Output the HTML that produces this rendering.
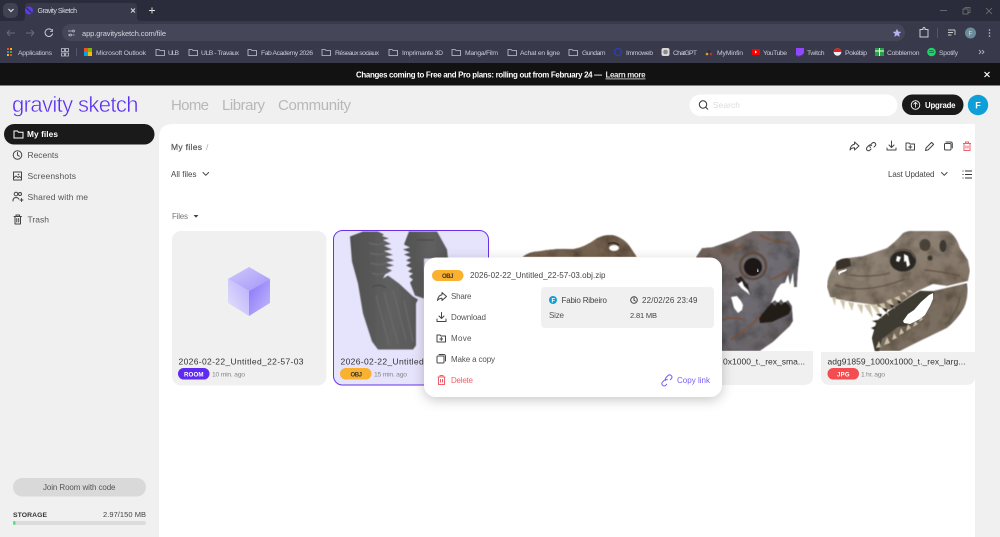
<!DOCTYPE html>
<html><head><meta charset="utf-8"><title>Gravity Sketch</title>
<style>
html,body{margin:0;padding:0;background:#f0f0f0;overflow:hidden}
svg{display:block;font-family:"Liberation Sans",sans-serif}
.ic{fill:none;stroke:#444;stroke-width:1;stroke-linecap:round;stroke-linejoin:round}
.bm{font-size:6.8px;fill:#c9cad4}
.fo{fill:none;stroke:#c5c6d0;stroke-width:.8}
.sd{font-size:8.5px;fill:#555}
.pm{font-size:8px;fill:#555}
</style></head><body>
<svg xmlns="http://www.w3.org/2000/svg" width="1000" height="537" viewBox="0 0 1000 537">
<defs>
<linearGradient id="cL" x1="1" y1="0" x2="0" y2="1"><stop offset="0" stop-color="#b9aefb"/><stop offset="1" stop-color="#e6e3fb"/></linearGradient>
<linearGradient id="cR" x1="0" y1="0" x2="1" y2="1"><stop offset="0" stop-color="#8672f9"/><stop offset="1" stop-color="#c5bcfb"/></linearGradient>
<linearGradient id="cT" x1="0" y1="0" x2="1" y2="1"><stop offset="0" stop-color="#cfc9fb"/><stop offset="1" stop-color="#a496fa"/></linearGradient>
<filter id="tex" x="0" y="0" width="100%" height="100%">
<feTurbulence type="fractalNoise" baseFrequency=".07" numOctaves="3" seed="4" result="n"/>
<feColorMatrix in="n" type="matrix" values="1.100 0 0 0 .34 1.100 0 0 0 .33 1.100 0 0 0 .32 0 0 0 0 1" result="m"/>
<feBlend in="SourceGraphic" in2="m" mode="multiply" result="b"/>
<feComposite in="b" in2="SourceGraphic" operator="in"/>
<feGaussianBlur stdDeviation=".5"/>
</filter>
<linearGradient id="sk5" x1="0" y1="0" x2="1" y2="1"><stop offset="0" stop-color="#94897b"/><stop offset=".5" stop-color="#8a7e70"/><stop offset="1" stop-color="#7d6e5f"/></linearGradient>
<linearGradient id="sk4" x1="0" y1="0" x2="1" y2="1"><stop offset="0" stop-color="#7a675a"/><stop offset=".5" stop-color="#6f6d74"/><stop offset="1" stop-color="#625d60"/></linearGradient>
<linearGradient id="me" x1="0" y1="0" x2="1" y2="0"><stop offset="0" stop-color="#505050"/><stop offset=".6" stop-color="#606060"/><stop offset="1" stop-color="#585858"/></linearGradient>
<filter id="sh" x="-20%" y="-20%" width="140%" height="150%"><feDropShadow dx="0" dy="3" stdDeviation="6" flood-color="#000" flood-opacity=".22"/></filter>
<filter id="sf"><feGaussianBlur stdDeviation=".5"/></filter>
<g id="folder"><path class="fo" d="M0 1.500h3l1 1h4.500v5h-8.500z"/></g>
</defs>

<!-- browser chrome -->
<rect width="1000" height="63" fill="#2b2c3b"/>
<rect y="21" width="1000" height="42" fill="#383a4c"/>
<rect x="3" y="3" width="15" height="15" rx="5" fill="#404152"/>
<path d="M8.500 9l2.500 2.500 2.500-2.500" fill="none" stroke="#ddd" stroke-width="1.200"/>
<path d="M21 21q4 0 4-4V7q0-4 4-4h104q4 0 4 4v10q0 4 4 4z" fill="#383a4c"/>
<circle cx="29" cy="10.500" r="4" fill="#5b3bea"/><path d="M26.500 8l5 5" stroke="#2b2c3b" stroke-width="1"/>
<text x="37.500" y="13" font-size="7" fill="#d8d8e0" textLength="39.500">Gravity Sketch</text>
<path d="M131 8.500l4 4M135 8.500l-4 4" stroke="#ddd" stroke-width=".9"/>
<path d="M149 10.500h6M152 7.500v6" stroke="#ddd" stroke-width="1"/>
<path d="M940 10.500h7" stroke="#777" stroke-width=".8"/>
<rect x="963" y="9" width="5" height="5" fill="none" stroke="#777" stroke-width=".8"/><path d="M965 9V7.500h5v5h-2" fill="none" stroke="#777" stroke-width=".7"/>
<path d="M986 8l6 6M992 8l-6 6" stroke="#777" stroke-width=".8"/>

<rect x="62" y="24" width="843" height="17" rx="8.500" fill="#454658"/>
<path d="M7 33h8M7 33l3-3M7 33l3 3" fill="none" stroke="#6b6c7a" stroke-width="1"/>
<path d="M34 33h-8M34 33l-3-3M34 33l-3 3" fill="none" stroke="#6b6c7a" stroke-width="1"/>
<path d="M52 30.500a3.800 3.800 0 1 0 .6 3" fill="none" stroke="#c9cad4" stroke-width="1"/><path d="M52.500 29v2.500H50" fill="none" stroke="#c9cad4" stroke-width=".8"/>
<path d="M68 31h4M68 35h1.500M72.500 35h2" stroke="#c9cad4" stroke-width=".8"/><circle cx="73.500" cy="31" r="1" fill="none" stroke="#c9cad4" stroke-width=".7"/><circle cx="70.500" cy="35" r="1" fill="none" stroke="#c9cad4" stroke-width=".7"/>
<text x="82" y="36" font-size="7.500" fill="#d5d6de" textLength="84">app.gravitysketch.com/file</text>
<path d="M897 28.800l1.300 2.800 3 .3-2.300 2 .7 3-2.700-1.600-2.700 1.600.7-3-2.300-2 3-.3z" fill="#b7b3f2"/>
<path d="M920 29.500h3v-1a1 1 0 0 1 2 0v1h3v7.500h-8z" fill="none" stroke="#ccc" stroke-width="1"/>
<path d="M937.500 28v10" stroke="#555668"/>
<path d="M948 30h7M948 32.500h5M948 35h3.500M955 30v5" stroke="#ccc" stroke-width=".9" fill="none"/>
<circle cx="970.500" cy="33" r="5.500" fill="#6c8c9a"/><text x="968.500" y="35.500" font-size="6" fill="#ddd">F</text>
<circle cx="989.500" cy="30" r=".8" fill="#ccc"/><circle cx="989.500" cy="33" r=".8" fill="#ccc"/><circle cx="989.500" cy="36" r=".8" fill="#ccc"/>

<!-- bookmarks -->
<g>
<rect x="7" y="48" width="2" height="2" fill="#e84a3c"/><rect x="10" y="48" width="2" height="2" fill="#f4b400"/><rect x="7" y="51" width="2" height="2" fill="#3b7ded"/><rect x="10" y="51" width="2" height="2" fill="#32a852"/><rect x="7" y="54" width="2" height="2" fill="#f4b400"/><rect x="10" y="54" width="2" height="2" fill="#e84a3c"/>
<text class="bm" x="18" y="55" textLength="34">Applications</text>
<path d="M61.500 48.500h3v3h-3zM65.500 48.500h3v3h-3zM61.500 53h3v3h-3zM65.500 53h3v3h-3z" fill="none" stroke="#c5c6d0" stroke-width=".8"/>
<path d="M76.500 48v8" stroke="#555668"/>
<rect x="84" y="48" width="4" height="4" fill="#f25022"/><rect x="88" y="48" width="4" height="4" fill="#7fba00"/><rect x="84" y="52" width="4" height="4" fill="#00a4ef"/><rect x="88" y="52" width="4" height="4" fill="#ffb900"/>
<text class="bm" x="96" y="55" textLength="50">Microsoft Outlook</text>
<use href="#folder" x="156" y="48"/><text class="bm" x="168" y="55" textLength="11">ULB</text>
<use href="#folder" x="189" y="48"/><text class="bm" x="201" y="55" textLength="38">ULB - Travaux</text>
<use href="#folder" x="248" y="48"/><text class="bm" x="261" y="55" textLength="52">Fab Academy 2026</text>
<use href="#folder" x="322" y="48"/><text class="bm" x="335" y="55" textLength="44">Réseaux sociaux</text>
<use href="#folder" x="389" y="48"/><text class="bm" x="402" y="55" textLength="41">Imprimante 3D</text>
<use href="#folder" x="452" y="48"/><text class="bm" x="465" y="55" textLength="33">Manga/Film</text>
<use href="#folder" x="508" y="48"/><text class="bm" x="520" y="55" textLength="40">Achat en ligne</text>
<use href="#folder" x="569" y="48"/><text class="bm" x="582" y="55" textLength="23.500">Gundam</text>
<circle cx="618" cy="52" r="3.500" fill="none" stroke="#2d3fc4" stroke-width="1.100"/><text class="bm" x="626" y="55" textLength="27">Immoweb</text>
<rect x="661.500" y="48" width="8" height="8" rx="2" fill="#d8d8d8"/><circle cx="665.500" cy="52" r="2.300" fill="#888"/><text class="bm" x="673" y="55" textLength="24">ChatGPT</text>
<circle cx="707" cy="54" r="1.300" fill="#d8a020"/><circle cx="711" cy="54" r="1.300" fill="#c03030"/><circle cx="709" cy="51.500" r="1" fill="#222"/><text class="bm" x="717" y="55" textLength="26">MyMinfin</text>
<rect x="752" y="49" width="8" height="6" rx="1" fill="#f00"/><path d="M755 50.500l2.200 1.500-2.200 1.500z" fill="#fff"/><text class="bm" x="763" y="55" textLength="24">YouTube</text>
<path d="M796 48h8v5l-2.500 2.500h-2L798 57v-1.500h-2z" fill="#9146ff"/><text class="bm" x="807" y="55" textLength="17.500">Twitch</text>
<circle cx="837.500" cy="52" r="3.800" fill="#eee"/><path d="M833.700 52a3.800 3.800 0 0 1 7.600 0z" fill="#d22"/><text class="bm" x="845" y="55" textLength="22">Pokébip</text>
<rect x="875" y="48" width="9" height="8" fill="#25a244"/><path d="M879.500 48v8M875 51h9" stroke="#fff" stroke-width="1"/><text class="bm" x="887" y="55" textLength="32.500">Cobblemon</text>
<circle cx="931.500" cy="52" r="4.300" fill="#1ed760"/><path d="M929 50.800q2.500-.6 5 .5M929.300 52.400q2.200-.5 4.300.4" stroke="#145" stroke-width=".6" fill="none"/><text class="bm" x="939" y="55" textLength="19">Spotify</text>
<path d="M979 50l2 2-2 2M982 50l2 2-2 2" fill="none" stroke="#c5c6d0" stroke-width=".8"/>
</g>

<!-- banner -->
<rect y="63" width="1000" height="22.500" fill="#121212"/>
<text x="356" y="77.500" font-size="7.900" font-weight="bold" fill="#fff" textLength="246">Changes coming to Free and Pro plans: rolling out from February 24 —</text>
<text x="605.500" y="77.500" font-size="7.900" font-weight="bold" fill="#e8e8e8" textLength="40" text-decoration="underline">Learn more</text>
<path d="M984.500 72l5 5M989.500 72l-5 5" stroke="#fff" stroke-width="1.200"/>

<!-- header -->
<rect y="85.500" width="1000" height="452" fill="#f0f0f0"/>
<text x="12" y="112" font-size="22" fill="#5a2ff0" stroke="#f0f0f0" stroke-width=".45" textLength="126.500">gravity sketch</text>
<text x="171" y="110" font-size="15" fill="#b8b8b8" textLength="38">Home</text>
<text x="222" y="110" font-size="15" fill="#b8b8b8" textLength="43">Library</text>
<text x="278" y="110" font-size="15" fill="#b8b8b8" textLength="73">Community</text>
<rect x="689.500" y="94.500" width="208" height="21.500" rx="10.700" fill="#fff"/>
<circle cx="703" cy="104.500" r="3.700" fill="none" stroke="#333" stroke-width="1"/><path d="M705.700 107.200l2.300 2.300" stroke="#333" stroke-width="1"/>
<text x="713" y="108" font-size="8.500" fill="#dcdcdc" textLength="27">Search</text>
<rect x="902" y="94.500" width="61.500" height="20.500" rx="10.200" fill="#1a1a1a"/>
<circle cx="915.500" cy="105" r="4.300" fill="none" stroke="#fff" stroke-width=".9"/><path d="M915.500 107.500v-5M913.500 104.300l2-2 2 2" fill="none" stroke="#fff" stroke-width=".8"/>
<text x="925" y="108" font-size="7.800" font-weight="bold" fill="#fff" textLength="30.500">Upgrade</text>
<circle cx="978" cy="105" r="10.200" fill="#0e9fd8"/><text x="975.200" y="108.500" font-size="9" font-weight="bold" fill="#fff">F</text>

<!-- sidebar -->
<rect x="4" y="124" width="150.500" height="20.500" rx="10.200" fill="#1a1a1a"/>
<path d="M14 131h3.500l1 1.300h4.500v5.700h-9z" fill="none" stroke="#fff" stroke-width="1"/>
<text x="27" y="137" font-size="8.300" font-weight="bold" fill="#fff" textLength="31">My files</text>
<circle cx="17.500" cy="155" r="4.300" class="ic"/><path class="ic" d="M17.500 152.500v2.700l1.800 1"/>
<text class="sd" x="27.500" y="158" textLength="31">Recents</text>
<rect x="13.500" y="172" width="8" height="8" class="ic"/><path class="ic" d="M13.500 178l2.500-2 2 1.500 1.500-1 2 1.500"/><circle cx="18.500" cy="174.500" r=".8" fill="#444"/>
<text class="sd" x="27.500" y="179" textLength="48.500">Screenshots</text>
<circle cx="16" cy="194" r="1.800" class="ic"/><circle cx="20" cy="194" r="1.500" class="ic"/><path class="ic" d="M13 201q0-3.500 3-3.500 2 0 2.800 1.500M20 200h3M21.500 198.500v3"/>
<text class="sd" x="27.500" y="200" textLength="60.500">Shared with me</text>
<path class="ic" d="M14 216.500h7.500M15 216.500v7.500h5.500v-7.500M16 216.500v-1.500h3.500v1.500M16.800 218.500v3.500M18.700 218.500v3.500"/>
<text class="sd" x="27.500" y="222.500" textLength="21.500">Trash</text>
<rect x="13" y="478" width="133" height="18.500" rx="9.200" fill="#d9d9d9"/>
<text x="43" y="490" font-size="8" fill="#555" textLength="72.500">Join Room with code</text>
<text x="13" y="517" font-size="6.800" fill="#333" textLength="34" font-weight="bold">STORAGE</text>
<text x="103" y="517" font-size="7.500" fill="#444" textLength="43">2.97/150 MB</text>
<rect x="13" y="521" width="133" height="4" rx="2" fill="#dcdcdc"/><rect x="13" y="521" width="2.500" height="4" rx="1.200" fill="#5fdc7c"/>

<!-- main panel -->
<path d="M975 124v413H159V138q0-14 14-14z" fill="#fff"/>
<text x="171" y="150" font-size="8.500" fill="#555" stroke="#555" stroke-width=".2" textLength="31">My files</text>
<text x="206" y="150" font-size="8.500" fill="#aaa">/</text>
<text x="171" y="177" font-size="8" fill="#444" textLength="25.500">All files</text>
<path class="ic" d="M203 172.500l2.800 2.800 2.800-2.800"/>
<text x="172" y="219" font-size="8" fill="#777" textLength="16">Files</text>
<path d="M193.500 215h5l-2.500 2.800z" fill="#444"/>

<!-- action icons -->
<path class="ic" d="M854.500 142l4.500 4-4.500 4v-2.300q-3 0-4.500 2.300.5-5 4.500-5.700z"/>
<path class="ic" transform="translate(0 1.500)" d="M871 147.500l-1.300 1.300a2 2 0 0 1-2.800-2.800l2-2a2 2 0 0 1 2.800 0M874 145.500l1.300-1.300a2 2 0 0 0-2.800-2.800l-2 2a2 2 0 0 0 0 2.800"/>
<path class="ic" d="M891.500 141v6M889 145l2.500 2.500 2.500-2.500M887 148v2h9v-2"/>
<path class="ic" d="M906 143h3l1 1h4.500v6H906zM910.300 145.500v3M908.800 147h3"/>
<path class="ic" d="M925.500 150.500l.6-2.600 5.500-5.500 2 2-5.500 5.500z"/>
<rect x="944.500" y="143.500" width="6.500" height="6.500" rx="1" class="ic"/><path class="ic" d="M946 142h4.500q1.800 0 1.800 1.800V148"/>
<path d="M963 143.500h8M964 143.500v7h6v-7M965.500 143.500V142h3v1.500M966 145.500v3M968 145.500v3" fill="none" stroke="#f0606a" stroke-width="1"/>
<text x="888" y="177" font-size="8" fill="#444" textLength="46.500">Last Updated</text>
<path class="ic" d="M941.500 172.500l2.800 2.800 2.800-2.800"/>
<path d="M965 171h7M965 174.500h7M965 178h7" stroke="#333" stroke-width="1"/><path d="M962.500 171h1M962.500 174.500h1M962.500 178h1" stroke="#333" stroke-width="1"/>

<!-- card 1 -->
<rect x="172" y="231" width="154.500" height="154.500" rx="9" fill="#f0f0f0"/>
<path d="M249 267l21 12-21 12-21-12z" fill="url(#cT)"/>
<path d="M228 279l21 12v25l-21-13z" fill="url(#cL)"/>
<path d="M270 279l-21 12v25l21-13z" fill="url(#cR)"/>
<text x="178.500" y="364.500" font-size="8.500" fill="#333" textLength="125">2026-02-22_Untitled_22-57-03</text>
<rect x="178" y="368" width="31.500" height="11.500" rx="5.700" fill="#5f2bf2"/>
<text x="184" y="376.500" font-size="6.200" font-weight="bold" fill="#fff" textLength="19.500">ROOM</text>
<text x="212" y="376.500" font-size="6.800" fill="#888" textLength="33">10 min. ago</text>

<!-- card 2 -->
<rect x="333.500" y="230.500" width="155" height="154.500" rx="9" fill="#e6e3fc" stroke="#6a30ea" stroke-width="1"/>
<g filter="url(#sf)">
<path fill="url(#me)" d="M363 231.500H378l6 3-2 1.500 7 2.500-6 1.500 8 4-7 1.500 8 4-8 1.500 9 4-8 1.500 9 4-8 2 8 3-8 2 6 3-7 4-2 4 5-3 11 8 14 13 5 3-2 4v42l-3 4h-35l-6-8-9-28-5-30-6-22-2-25z"/>
<path fill="url(#me)" d="M409 231.500h28l10 18 1 9h-24v40l-9-3-5-13 3-3-4-3 4-3-5-2 4-3-6-3 5-3-5-2 5-3-7-3 6-2-7-3 7-2-6-3z"/>
<path d="M369 243q9 3 15 0M370 253q9 3 15 0M371 263q9 3 15 0M372 273q7 3 12 0M376 295l13 50M384 292l14 52M393 290l13 50M404 300l9 42" stroke="#6a6a6a" stroke-width="1.500" fill="none" opacity=".8"/>
<path d="M372 287q8-4 14 1M416 240h18" stroke="#4a4a4a" stroke-width="1.200" fill="none"/>
</g>
<text x="340.500" y="364.500" font-size="8.500" fill="#333" textLength="125">2026-02-22_Untitled_22-57-03</text>
<rect x="340" y="368" width="31.500" height="11.500" rx="5.700" fill="#fbb130"/>
<text x="350.500" y="376.500" font-size="6" font-weight="bold" fill="#333" textLength="11.500">OBJ</text>
<text x="374" y="376.500" font-size="6.800" fill="#888" textLength="33">15 min. ago</text>

<!-- card 3 -->
<rect x="496" y="351" width="154" height="34" rx="6" fill="#f0f0f0"/>
<path d="M522 257q8-6 18-6 15-3 33-2 12-2 24-11 9-4 16-3 12 3 18 13l6 9z" fill="#75624f" filter="url(#tex)"/>
<ellipse cx="614" cy="248" rx="5" ry="3" fill="#fff" filter="url(#sf)"/>
<path d="M608 244q6-3 11 1" stroke="#3a3028" stroke-width="1.500" fill="none"/>

<!-- card 4 -->
<path d="M659 351h154v25q0 9-9 9h-136q-9 0-9-9z" fill="#f0f0f0"/>
<path d="M696 257L702 248 713 247 733 240 753 231H790Q798 240 800 251L798 270 797 287 794 287 793 273 790 285 788 275 785 283 781 284 777 289 771 303 775 300 778 303 781 299 784 303 788 300 792 306 793 321 790 326 773 342 760 351H700z" fill="url(#sk4)" filter="url(#tex)"/>
<path d="M759 318l9-11 4-4 3 3 3-4 3 3 4-3 4 3 2 4-2 5-17 8-12 1z" fill="#221c18" filter="url(#sf)"/>
<ellipse cx="753" cy="267" rx="9" ry="9" fill="#1e1815" filter="url(#sf)"/>
<ellipse cx="753" cy="266" rx="13" ry="13" fill="none" stroke="#5e4c40" stroke-width="2.500" filter="url(#sf)"/>
<path d="M758 268l.5 4-1.500-.5z" fill="#fff"/>
<path d="M735 278l3 0 3-2 3 4 2 3 2 1 1 7 2 3-6-5-5-3-4-6z" fill="#2b2320" filter="url(#sf)"/>
<path d="M738 284l4-3 2 5 4 4 2 5-5-4-4-3z" fill="#fff" filter="url(#sf)"/>
<path d="M731 297l6-1 4 5 2 4-1 5-4 3-4-5z" fill="#fff" filter="url(#sf)"/>
<path d="M730 340q20-12 30-24M722 320q12-4 22 0M760 235q15 8 30 8M722 253q12-3 22-8M770 280q10-4 20-10" stroke="#7f4f32" stroke-width="2" fill="none" opacity=".7" filter="url(#sf)"/>

<!-- card 5 -->
<path d="M821 352h154v24q0 9-9 9H830q-9 0-9-9z" fill="#f0f0f0"/>
<path d="M967 283Q969 297 964 308 957 320 947 328L920 341 900 351H875L872 338 877 321 897 305 920 291 933 291z" fill="#7a6e60" filter="url(#tex)"/>
<path d="M934 292L920 317 907 326 898 327 882 339 879 351H875L872 338 877 321 897 305 920 291z" fill="#3c3a32" filter="url(#sf)"/>
<path d="M933 293l-4 2-8 7-7 8-6 4-5 7 1 2 6 1 10-5 5-4 5-9 3-7z" fill="#fff"/>
<path d="M827 287Q827 276 833 268 838 260 847 258L863 256 887 248Q895 242 903 233 909 230 914 231H948Q956 235 960 248L968 260 970 271 968 281 947 286 933 284 918 291 898 305 890 310 868 304 846 301 837 299 830 297z" fill="url(#sk5)" filter="url(#tex)"/>
<ellipse cx="903" cy="261" rx="13" ry="10.500" fill="#2a2622" filter="url(#sf)"/>
<path d="M904 254l4 2 2 9-3 2-1-6-2 1zM897 256l-1 5 3 1 2-5z" fill="#fff" filter="url(#sf)"/>
<path d="M895 252q8-5 16 0l4 6" stroke="#5c5044" stroke-width="2" fill="none" filter="url(#sf)"/>
<ellipse cx="925" cy="245" rx="5.500" ry="6" fill="#4a4238" filter="url(#sf)"/>
<ellipse cx="943" cy="246" rx="3.500" ry="6" fill="#3e3830" filter="url(#sf)"/>
<circle cx="930" cy="258" r="2.500" fill="#3a342c" filter="url(#sf)"/>
<path d="M836 262q7-5 14-3l1 7-9 3-6 1z" fill="#39322c" filter="url(#sf)"/>
<path d="M838 272q4-2 9-3l-1 2-5 2-2 2z" fill="#f4f2ee"/>
<g fill="#cfc2a8" filter="url(#sf)">
<path d="M832 298l4-1-1 9zM840 300l5 0-1 10zM848 302l6 1-2 8zM857 304l6 1-1 9zM864 305l6-1 3 14zM871 305l6-1 5 15zM879 304l5-1 5 13zM886 301l5-2 4 10zM894 298l5-2 3 7zM901 293l4-1 3 5zM907 291l3-1 3 3z"/>
<path d="M876 348l3-7 2 6zM884 345l3-8 3 6zM892 340l2-7 3 5zM899 335l2-7 3 5zM906 331l2-7 3 4zM913 327l2-6 3 3zM919 322l2-5 2 2z"/>
</g>
<g fill="#26241f" filter="url(#sf)"><path d="M875 330l-4-2 5-2zM877 323l-5-2 6-1zM881 317l-5-3 6 0zM886 312l-4-4 6 1zM892 308l-3-4 6 2zM899 304l-2-4 5 2z"/></g>
<path d="M835 285q30 10 70-6M850 275q20 3 40-2M925 270q20 2 35 6M945 325q12-12 15-28" stroke="#5a4e41" stroke-width="1.500" fill="none" opacity=".7" filter="url(#sf)"/>
<text x="827.500" y="364.500" font-size="8.500" fill="#333" textLength="138">adg91859_1000x1000_t._rex_larg...</text>
<rect x="827.500" y="368" width="31.500" height="11.500" rx="5.700" fill="#f44c50"/>
<text x="837" y="376.500" font-size="6" font-weight="bold" fill="#fff" textLength="12.500">JPG</text>
<text x="861" y="376.500" font-size="6.800" fill="#888" textLength="24">1 hr. ago</text>
<text x="723" y="364.500" font-size="8.500" fill="#333" textLength="82">0x1000_t._rex_sma...</text>

<!-- popup -->
<rect x="424" y="257.500" width="298" height="139.500" rx="12" fill="#fff" filter="url(#sh)"/>
<rect x="432" y="270" width="31.500" height="11" rx="5.500" fill="#fbb130"/>
<text x="442" y="278" font-size="6" font-weight="bold" fill="#333" textLength="11.500">OBJ</text>
<text x="470" y="278" font-size="8" fill="#444" textLength="135.500">2026-02-22_Untitled_22-57-03.obj.zip</text>
<path class="ic" d="M442 292.500l4.500 4-4.500 4v-2.300q-3 0-4.500 2.300.5-5 4.500-5.700z"/>
<text class="pm" x="451" y="299" textLength="20.500">Share</text>
<path class="ic" d="M441.500 312.500v6M439 316l2.500 2.500 2.500-2.500M437 319v2.500h9V319"/>
<text class="pm" x="451" y="320" textLength="35">Download</text>
<path class="ic" d="M437 335h3l1 1h4.500v6H437zM441.300 337.500v3M439.800 339h3"/>
<text class="pm" x="451" y="341" textLength="20.500">Move</text>
<rect x="437" y="356" width="7" height="7" rx="1" class="ic"/><path class="ic" d="M439 354.500h4.500q2 0 2 2v4.500"/>
<text class="pm" x="451" y="362" textLength="44">Make a copy</text>
<path d="M437.500 377h8M438.500 377v7.500h6V377M440 377v-1.500h3v1.500M440.500 379v3.500M442.500 379v3.500" fill="none" stroke="#f0606a" stroke-width="1"/>
<text x="451" y="383" font-size="8" fill="#f0606a" textLength="22">Delete</text>
<rect x="541" y="287" width="173" height="41" rx="4" fill="#f0f0f0"/>
<circle cx="553" cy="300" r="4" fill="#0e9fd8"/><text x="551.500" y="302.500" font-size="6" font-weight="bold" fill="#fff">F</text>
<text x="561.500" y="303" font-size="8" fill="#444" textLength="45.500">Fabio Ribeiro</text>
<circle cx="634" cy="300" r="3.300" class="ic"/><path class="ic" d="M634 298v2.200l1.300.8"/>
<text x="642" y="303" font-size="8" fill="#444" textLength="55.500">22/02/26 23:49</text>
<text x="549" y="318" font-size="8" fill="#555" textLength="15">Size</text>
<text x="630" y="318" font-size="7.500" fill="#444" textLength="27">2.81 MB</text>
<path d="M667 381l-1.500 1.500a2.300 2.300 0 0 1-3.200-3.200l2.300-2.300a2.300 2.300 0 0 1 3.200 0M670 377l1.500-1.500a2.300 2.300 0 0 0-3.200-3.200l-2.300 2.300a2.300 2.300 0 0 0 0 3.200" fill="none" stroke="#7a5cff" stroke-width="1" transform="translate(0 3)"/>
<text x="677" y="383" font-size="8" fill="#7a5cff" textLength="33">Copy link</text>
</svg>
</body></html>
